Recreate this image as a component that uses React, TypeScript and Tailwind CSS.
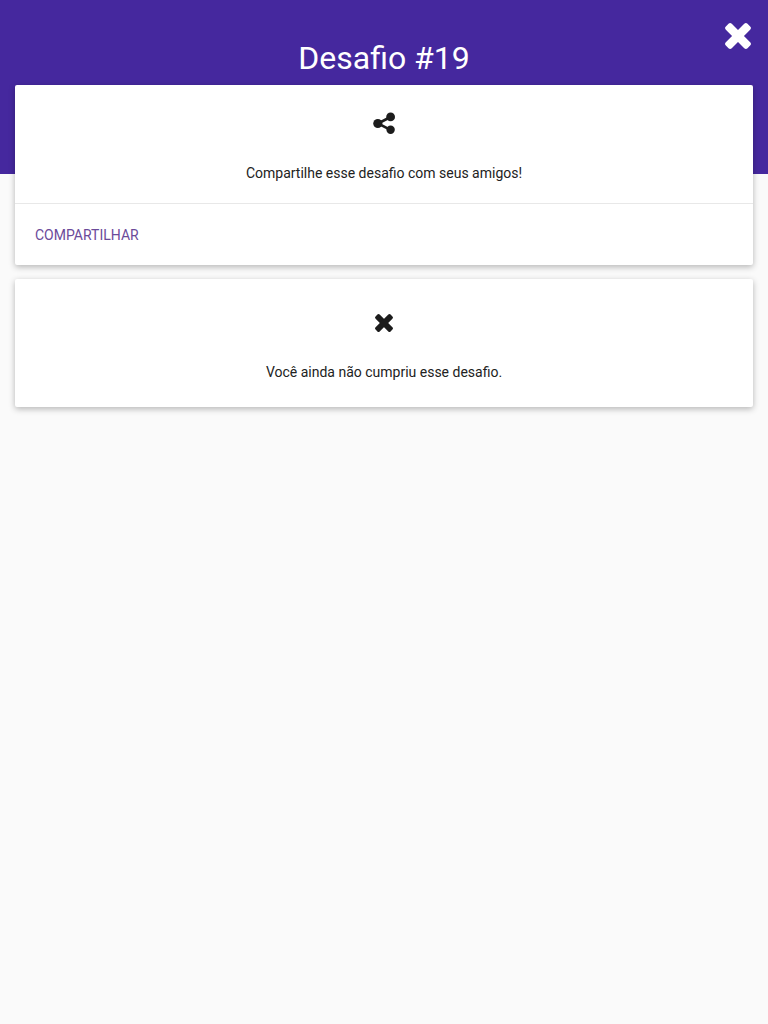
import React from "react";

const Cross = ({ className }: { className: string }) => (
  <svg viewBox="0 0 28 28" className={className} fill="currentColor" aria-hidden="true">
    <rect x="-2.5" y="9.5" width="33" height="9" rx="2.5" transform="rotate(45 14 14)" />
    <rect x="-2.5" y="9.5" width="33" height="9" rx="2.5" transform="rotate(-45 14 14)" />
  </svg>
);

const Share = ({ className }: { className: string }) => (
  <svg viewBox="0 0 23 23" className={className} aria-hidden="true">
    <path d="M17.5 5 L5 11.5 L17.5 17.8" stroke="currentColor" strokeWidth="2.6" fill="none" />
    <circle cx="17.6" cy="4.9" r="4.4" fill="currentColor" />
    <circle cx="17.6" cy="17.8" r="4.2" fill="currentColor" />
    <circle cx="4.8" cy="11.5" r="4.6" fill="currentColor" />
  </svg>
);

export default function App() {
  return (
    <div className="min-h-[1024px] bg-[#fafafa] font-['Roboto',sans-serif] text-[14px] text-[#222222]">
      <header className="relative h-[174px] bg-[#45289e] pt-[38px] text-center text-white">
        <h1 className="text-[32px] leading-[40px] font-normal">Desafio #19</h1>
        <button className="absolute left-[725px] top-[23px] text-white" aria-label="Fechar">
          <Cross className="h-[26px] w-[26px]" />
        </button>
      </header>
      <main className="relative mx-[15px] mt-[-89px] flex flex-col gap-[14px]">
        <section className="rounded-[2px] bg-white shadow-[0_2px_6px_rgba(0,0,0,0.28)]">
          <div className="flex h-[119px] flex-col items-center border-b border-[#e8e8e8] pt-[27px]">
            <Share className="h-[23px] w-[23px] text-[#1c1c1c]" />
            <p className="mt-[28px] leading-[20px]">Compartilhe esse desafio com seus amigos!</p>
          </div>
          <div className="flex h-[61px] items-center px-[20px] pt-[1px]">
            <a className="leading-[20px] text-[#6b4a9a]">COMPARTILHAR</a>
          </div>
        </section>
        <section className="flex h-[128px] flex-col items-center rounded-[2px] bg-white pt-[35px] shadow-[0_2px_6px_rgba(0,0,0,0.28)]">
          <Cross className="h-[18px] w-[18px] text-[#1c1c1c]" />
          <p className="mt-[30px] leading-[20px]">Você ainda não cumpriu esse desafio.</p>
        </section>
      </main>
    </div>
  );
}
